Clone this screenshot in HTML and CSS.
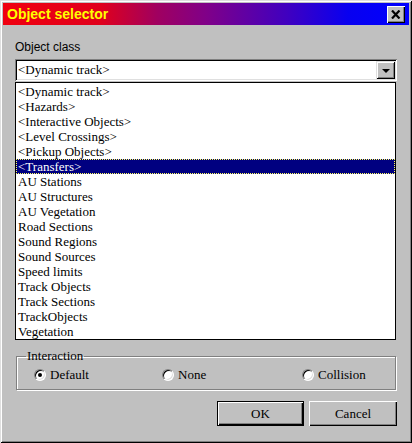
FILE: index.html
```html
<!DOCTYPE html>
<html>
<head>
<meta charset="utf-8">
<link rel="stylesheet" href="styles.css">
</head>
<body>
<div class="window">
  <div class="titlebar">
    <span class="title">Object selector</span>
    <span class="close"><svg width="10" height="9" viewBox="0 0 10 9"><path d="M1 0.5 L8.5 8.5 M8.5 0.5 L1 8.5" stroke="#000" stroke-width="2.2" fill="none"/></svg></span>
  </div>
  <div class="content">
    <div class="label">Object class</div>
    <div class="combo">
      <span class="combo-text">&lt;Dynamic track&gt;</span>
      <span class="combo-btn"><span class="arrow"></span></span>
    </div>
    <ul class="list">
      <li>&lt;Dynamic track&gt;</li>
      <li>&lt;Hazards&gt;</li>
      <li>&lt;Interactive Objects&gt;</li>
      <li>&lt;Level Crossings&gt;</li>
      <li>&lt;Pickup Objects&gt;</li>
      <li class="selected">&lt;Transfers&gt;</li>
      <li>AU Stations</li>
      <li>AU Structures</li>
      <li>AU Vegetation</li>
      <li>Road Sections</li>
      <li>Sound Regions</li>
      <li>Sound Sources</li>
      <li>Speed limits</li>
      <li>Track Objects</li>
      <li>Track Sections</li>
      <li>TrackObjects</li>
      <li>Vegetation</li>
    </ul>
    <fieldset class="group">
      <legend class="group-label">Interaction</legend>
      <div class="radios">
        <span class="radio"><span class="rb checked"></span>Default</span>
        <span class="radio"><span class="rb"></span>None</span>
        <span class="radio"><span class="rb"></span>Collision</span>
      </div>
    </fieldset>
    <div class="buttons">
      <span class="btn default">OK</span>
      <span class="btn">Cancel</span>
    </div>
  </div>
</div>
</body>
</html>
```
FILE: styles.css
```css
html, body {
  margin: 0;
  padding: 0;
  background: #c0c0c0;
}
.window {
  width: 412px;
  height: 443px;
  box-sizing: border-box;
  padding: 3px;
  background: #c0c0c0;
  box-shadow: inset 1px 1px 0 #dfdfdf, inset -1px -1px 0 #000, inset 2px 2px 0 #fff, inset -2px -2px 0 #808080;
  font-family: "Liberation Serif", "Times New Roman", serif;
  font-size: 13px;
  color: #000;
}
.titlebar {
  height: 22px;
  display: flex;
  align-items: center;
  justify-content: space-between;
  padding: 0 4px 0 4px;
  background: linear-gradient(to right, #f00010 0%, #e0001c 24%, #a00060 38%, #800088 50%, #4000c0 70%, #0800f0 85%, #0000ff 100%);
}
.title {
  font-family: "Liberation Sans", Arial, sans-serif;
  font-weight: bold;
  font-size: 14px;
  color: #ffff00;
}
.close {
  width: 18px;
  height: 17px;
  box-sizing: border-box;
  background: #c0c0c0;
  display: flex;
  align-items: center;
  justify-content: center;
  box-shadow: inset 1px 1px 0 #fff, inset -1px -1px 0 #000, inset -2px -2px 0 #808080;
}
.content {
  padding: 15px 12px 0 12px;
}
.label {
  font-family: "Liberation Sans", Arial, sans-serif;
  font-size: 12px;
  line-height: 14px;
  height: 14px;
  margin-bottom: 5px;
}
.combo {
  height: 22px;
  box-sizing: border-box;
  background: #fff;
  box-shadow: inset 1px 1px 0 #808080, inset -1px -1px 0 #fff, inset 2px 2px 0 #000, inset -2px -2px 0 #dfdfdf;
  display: flex;
  align-items: center;
  justify-content: space-between;
  padding: 2px 2px 2px 2px;
}
.combo-text {
  padding-left: 1px;
  line-height: 16px;
}
.combo-btn {
  width: 19px;
  height: 18px;
  box-sizing: border-box;
  background: #c0c0c0;
  box-shadow: inset 1px 1px 0 #dfdfdf, inset -1px -1px 0 #000, inset 2px 2px 0 #fff, inset -2px -2px 0 #808080;
  display: flex;
  align-items: center;
  justify-content: center;
}
.arrow {
  width: 0;
  height: 0;
  border-left: 4px solid transparent;
  border-right: 4px solid transparent;
  border-top: 4px solid #000;
  margin-top: 1px;
}
.list {
  list-style: none;
  margin: 1px 1px 0 0;
  padding: 1px 0 0 0;
  border: 1px solid #000;
  background: #fff;
}
.list li {
  height: 15px;
  line-height: 15px;
  padding-left: 2px;
  white-space: nowrap;
}
.list li.selected {
  background: #000080;
  color: #fff;
  outline: 1px dotted #ffff60;
  outline-offset: -1px;
}
.group {
  margin: 9px 1px 0 1px;
  padding: 4px 0 6px 17px;
  border: 1px solid #808080;
  box-shadow: 1px 1px 0 #fff, inset 1px 1px 0 #fff;
  font-family: "Liberation Serif", "Times New Roman", serif;
  font-size: 13px;
}
.group-label {
  padding: 0 1px;
  margin-left: -8px;
  line-height: 14px;
  font-family: "Liberation Serif", "Times New Roman", serif;
  font-size: 13px;
}
.radios {
  display: grid;
  grid-template-columns: 128px 140px auto;
  align-items: center;
  height: 16px;
}
.radio {
  display: flex;
  align-items: center;
  gap: 4px;
  line-height: 16px;
  font-family: "Liberation Serif", "Times New Roman", serif;
}
.rb {
  width: 12px;
  height: 12px;
  box-sizing: border-box;
  border-radius: 50%;
  background: #fff;
  border: 1px solid;
  border-color: #808080 #fff #fff #808080;
  box-shadow: inset 1px 1px 0 #000, inset -1px -1px 0 #dfdfdf;
  display: flex;
  align-items: center;
  justify-content: center;
}
.rb.checked::after {
  content: "";
  width: 4px;
  height: 4px;
  border-radius: 50%;
  background: #000;
}
.buttons {
  display: flex;
  justify-content: flex-end;
  gap: 5px;
  margin-top: 11px;
}
.btn {
  width: 88px;
  height: 25px;
  box-sizing: border-box;
  display: flex;
  align-items: center;
  justify-content: center;
  background: #c0c0c0;
  font-family: "Liberation Serif", "Times New Roman", serif;
  box-shadow: inset 1px 1px 0 #fff, inset -1px -1px 0 #000, inset -2px -2px 0 #808080;
}
.btn.default {
  width: 87px;
  box-shadow: inset 0 0 0 1px #000, inset 2px 2px 0 #fff, inset -2px -2px 0 #000, inset -3px -3px 0 #808080;
}
```
